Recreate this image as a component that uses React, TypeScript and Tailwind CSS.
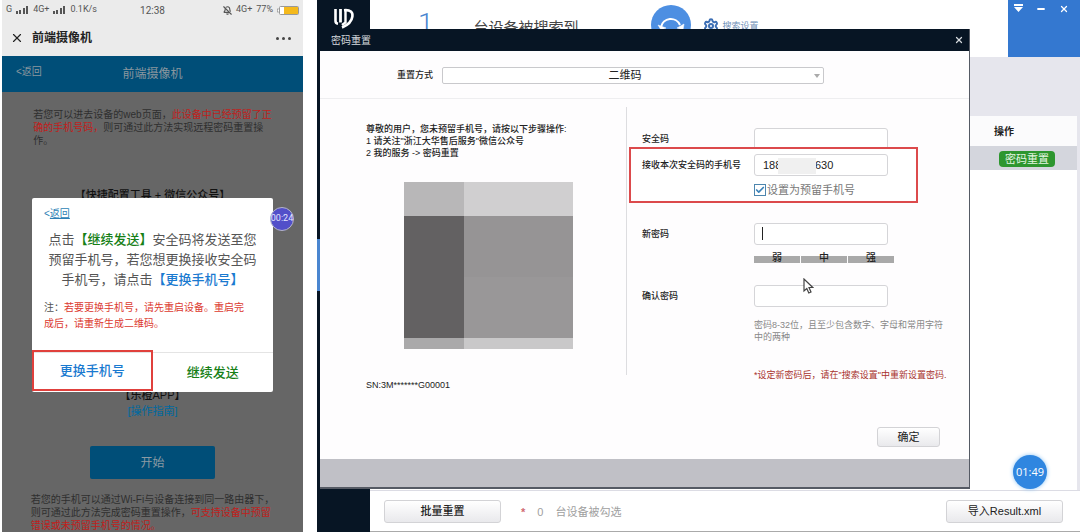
import React from 'react';
import { X, Settings, BellOff, Minus, Check } from 'lucide-react';

const Signal: React.FC = () => (
  <svg width="13" height="8" viewBox="0 0 13 8" fill="#555">
    <rect x="0" y="5" width="2" height="3" />
    <rect x="3" y="4" width="2" height="4" />
    <rect x="7" y="2" width="2" height="6" />
    <rect x="10" y="0" width="2" height="8" />
  </svg>
);

const Logo: React.FC = () => (
  <svg width="22" height="22" viewBox="0 0 22 22" fill="none" stroke="#fff">
    <path d="M2.500 1v12c0 1.500.8 2.500 2.500 2.800" strokeWidth="2.600" />
    <path d="M7.500 1v13.500" strokeWidth="2.800" />
    <path d="M11 2.200C17.500 1.500 20 4.500 19.400 8.500c-.6 4.500-4.400 8.500-10.400 11" strokeWidth="2.600" />
    <path d="M12.500 2v12.500L9 17" strokeWidth="2.400" />
  </svg>
);

const Cursor: React.FC = () => (
  <svg width="11" height="16" viewBox="0 0 11 16">
    <path
      d="M1 1v12l2.800-2.500 2 4.500 2.200-1-2-4.500h3.800z"
      fill="#fff"
      stroke="#444"
      strokeWidth="1.200"
    />
  </svg>
);

const Phone: React.FC = () => (
  <section className="relative flex w-[301px] shrink-0 flex-col bg-[#666]">
    <div className="flex h-5 items-center bg-[#ebebeb] px-1 text-[#555]">
      <div className="flex flex-1 items-center gap-1 font-[Roboto] text-[9px]">
        <span>G</span>
        <Signal />
        <span>4G+</span>
        <Signal />
        <span>0.1K/s</span>
      </div>
      <span className="font-[Roboto] text-[10px]">12:38</span>
      <div className="flex flex-1 items-center justify-end gap-1 font-[Roboto] text-[9px]">
        <BellOff className="size-[9px]" strokeWidth={3} />
        <span>4G+</span>
        <span>77%</span>
        <svg width="22" height="9" viewBox="0 0 22 9">
          <rect x="0.500" y="3" width="2" height="3" fill="#fff" stroke="#888" strokeWidth="0.600" />
          <rect x="2.500" y="0.500" width="19" height="8" rx="1" fill="#fff" stroke="#999" />
          <rect x="7" y="1" width="14" height="7" fill="#f4b91c" />
        </svg>
      </div>
    </div>

    <div className="flex h-9 items-center bg-[#ebebeb] px-2 text-[#222]">
      <button type="button" aria-label="关闭" className="mr-2">
        <X className="size-[14px]" strokeWidth={2} />
      </button>
      <h1 className="flex-1 text-[12px] font-bold">前端摄像机</h1>
      <button type="button" aria-label="更多" className="flex gap-[3px] px-1">
        <i className="size-[3px] rounded-full bg-[#444]" />
        <i className="size-[3px] rounded-full bg-[#444]" />
        <i className="size-[3px] rounded-full bg-[#444]" />
      </button>
    </div>

    <div className="grid h-9 grid-cols-3 items-center bg-[#004e78] px-[14px] text-[#8a979f]">
      <a href="#back" className="pb-1 text-[10px] leading-4">&lt;返回</a>
      <h2 className="text-center text-[12px]">前端摄像机</h2>
    </div>

    <div className="flex flex-1 flex-col items-center text-[#2f2f2f]">
      <p className="mt-4 text-[10px] leading-[13px] whitespace-nowrap">
        若您可以进去设备的web页面，<span className="text-[#c0201c]">此设备中已经预留了正</span>
        <br />
        <span className="text-[#c0201c]">确的手机号码，</span>则可通过此方法实现远程密码重置操
        <br />
        作。
      </p>
      <p className="mt-10 text-[11px] leading-4 font-medium text-[#111]">【快捷配置工具 + 微信公众号】</p>
      <p className="mt-[184px] text-[11px] leading-4 font-medium text-[#111]">【乐橙APP】</p>
      <a href="#guide" className="text-[11px] leading-4 text-[#00699f]">[操作指南]</a>
      <button type="button" className="mt-[27px] h-[33px] w-[125px] rounded-xs bg-[#004e78] text-[12px] text-[#8b9aa3]">
        开始
      </button>
      <p className="mt-[14px] text-[10px] leading-[13px] whitespace-nowrap">
        若您的手机可以通过Wi-Fi与设备连接到同一路由器下，
        <br />
        则可通过此方法完成密码重置操作，<span className="text-[#c0201c]">可支持设备中预留</span>
        <br />
        <span className="text-[#c0201c]">错误或未预留手机号的情况。</span>
      </p>
    </div>

    <div role="dialog" aria-label="更换手机号" className="absolute top-[198px] right-[30px] left-[30px] rounded-xs bg-white">
      <a href="#back" className="mt-2 ml-3 block text-[10px] leading-4 text-[#2d7fb5]">
        &lt;<span className="underline">返回</span>
      </a>
      <p className="mt-2 text-center text-[13px] leading-5 whitespace-nowrap text-[#555]">
        点击<span className="font-medium text-[#168016]">【继续发送】</span>安全码将发送至您
        <br />
        预留手机号，若您想更换接收安全码
        <br />
        手机号，请点击<span className="font-medium text-[#1a7ad0]">【更换手机号】</span>
      </p>
      <p className="mx-3 mt-[10px] text-[10px] leading-4 whitespace-nowrap text-[#dc3a30]">
        <span className="text-[#555]">注：</span>若要更换手机号，请先重启设备。重启完
        <br />
        成后，请重新生成二维码。
      </p>
      <div className="mt-5 grid grid-cols-2 border-t border-[#e4e4e4] text-[13px] font-medium">
        <button type="button" className="-mt-[3px] h-[41px] border-2 border-[#e0403c] text-[#1a7ad0]">
          更换手机号
        </button>
        <button type="button" className="h-[39px] text-[#168016]">继续发送</button>
      </div>
    </div>

    <div className="absolute top-[207px] right-[9px] flex size-6 items-center justify-center rounded-full border border-[#b5b5c8] bg-[#524fc9] font-[Roboto] text-[9px] text-[#e4e4ff]">
      00:24
    </div>
  </section>
);

const inputClass = 'h-[22px] w-[134px] rounded-[3px] border border-[#d5d5d8] bg-white px-2 text-[11px] text-[#222] outline-none';
const labelClass = 'w-28 shrink-0 font-medium';
const plainButton = 'rounded-[3px] border border-[#d3d3d6] bg-gradient-to-b from-white to-[#e9e9ec] text-[11px] text-[#222]';

const ResetForm: React.FC = () => (
  <form className="min-w-0 flex-1 text-[9px] leading-3 text-[#222]">
    <div className="flex items-center pt-[21px] pl-[15px]">
      <label htmlFor="code" className={labelClass}>安全码</label>
      <input id="code" className={inputClass} />
    </div>

    <div className="relative mr-[51px] -mt-[3px] ml-[2px] h-14 border-2 border-[#dc4a4c] bg-white pt-[5px] pl-[11px]">
      <div className="flex items-center">
        <label htmlFor="phone" className={labelClass}>接收本次安全码的手机号</label>
        <div className="relative">
          <input id="phone" className={`${inputClass} font-['Liberation_Sans']`} defaultValue="188           630" />
          <span className="absolute top-1 left-6 h-4 w-[38px] bg-[#f0f0f0]" />
        </div>
      </div>
      <label className="mt-[6px] ml-28 flex items-center text-[11px] leading-4 text-[#777]">
        <span className="relative mr-px flex size-3">
          <input type="checkbox" defaultChecked className="size-3 appearance-none border border-[#4d86ae] bg-white" />
          <Check className="pointer-events-none absolute inset-px size-[10px] text-[#3b82b8]" strokeWidth={4} />
        </span>
        设置为预留手机号
      </label>
    </div>

    <div className="mt-5 flex items-center pl-[15px]">
      <label htmlFor="new-password" className={labelClass}>新密码</label>
      <div className="relative">
        <input id="new-password" className={inputClass} />
        <span className="absolute top-1 left-2 h-[13px] w-px bg-[#222]" />
      </div>
    </div>
    <div className="mt-2 ml-[127px] flex gap-px text-center text-[10px] leading-[10px] font-medium">
      {['弱', '中', '强'].map((level) => (
        <span key={level} className="h-[10px] w-[46px] bg-linear-to-b from-transparent from-33% via-[#a9a9a9] via-33% to-[#a9a9a9]">
          {level}
        </span>
      ))}
    </div>
    <div className="mt-[22px] flex items-center pl-[15px]">
      <label htmlFor="confirm-password" className={labelClass}>确认密码</label>
      <div className="relative">
        <input id="confirm-password" className={inputClass} />
        <span className="pointer-events-none absolute -top-[7px] left-[49px]">
          <Cursor />
        </span>
      </div>
    </div>
    <p className="mt-3 ml-[127px] whitespace-nowrap text-[#888]">
      密码8-32位，且至少包含数字、字母和常用字符
      <br />
      中的两种
    </p>
    <p className="mt-[26px] ml-[127px] whitespace-nowrap text-[#a8322c]">*设定新密码后，请在"搜索设置"中重新设置密码.</p>
  </form>
);

const ResetDialog: React.FC = () => (
  <div role="dialog" aria-label="密码重置" className="absolute top-[29px] right-[110px] left-[3px] flex flex-col border-r border-b-2 border-[#555a64] bg-[#fefdfe]">
    <div className="flex h-[22px] items-center justify-between bg-[#071524] pr-[5px] pl-[11px] text-[10px] text-[#d5d9dd]">
      <h2>密码重置</h2>
      <button type="button" aria-label="关闭">
        <X className="size-[10px]" strokeWidth={3} />
      </button>
    </div>
    <div className="flex h-12 items-center gap-[9px] border-b border-[#eeeef0] pt-[2px] pl-[77px]">
      <label htmlFor="mode" className="text-[9px] font-medium text-[#222]">重置方式</label>
      <div className="relative mr-[145px] flex-1">
        <select id="mode" className="block h-[17px] w-full appearance-none rounded-xs border border-[#c9c9cc] bg-white pr-4 text-center [text-align-last:center] text-[11px] leading-[15px] text-[#222]">
          <option>二维码</option>
        </select>
        <span className="pointer-events-none absolute top-[7px] right-1 border-x-[3px] border-t-4 border-x-transparent border-t-[#aaa]" />
      </div>
    </div>
    <div className="mt-2 flex">
      <div className="w-[306px] shrink-0 pt-4 pl-[46px] text-[9px] leading-3 font-medium text-[#222]">
        <p className="whitespace-nowrap">
          尊敬的用户，您未预留手机号，请按以下步骤操作:
          <br />1 请关注"浙江大华售后服务"微信公众号
          <br />2 我的服务 -&gt; 密码重置
        </p>
        <div className="mt-[23px] ml-[38px] grid h-[167px] w-[169px] grid-cols-[60px_1fr] grid-rows-[34px_61px_61px_1fr]">
          <i className="bg-[#b8b7b8]" />
          <i className="bg-[#d0cfd0]" />
          <i className="row-span-2 bg-[#636162]" />
          <i className="bg-[#969495]" />
          <i className="bg-[#999798]" />
          <i className="bg-[#aaa9aa]" />
          <i className="bg-[#c9c8c9]" />
        </div>
        <p className="mt-[30px] text-[9px]">SN:3M*******G00001</p>
      </div>
      <div className="mb-4 w-px shrink-0 bg-[#dddde0]" />
      <ResetForm />
    </div>
    <div className="mt-9 mr-[29px] mb-3 flex justify-end">
      <button type="button" className={`${plainButton} h-5 w-[63px]`}>确定</button>
    </div>
    <div className="h-7 bg-[#c0c0c6]" />
  </div>
);

const Desktop: React.FC = () => (
  <section className="relative flex min-w-0 flex-1 bg-white">
    <aside className="relative w-[53px] shrink-0 bg-[#071524]">
      <div className="flex justify-center pt-2">
        <Logo />
      </div>
      <span className="absolute top-[239px] left-0 h-[52px] w-[3px] bg-[#4a86d0]" />
    </aside>
    <div className="flex min-w-0 flex-1 flex-col">
      <header className="flex h-[57px]">
        <div className="flex flex-1 items-start">
          <span className="mt-2 ml-12 font-[Roboto] text-[28px] leading-8 font-light text-[#4a86d0]">1</span>
          <span className="mt-4 ml-10 text-[15px] leading-6 text-[#444]">台设备被搜索到</span>
          <button type="button" aria-label="刷新" className="mt-[5px] ml-[72px] flex size-10 items-center justify-center rounded-full bg-[#4d8fe2]">
            <svg width="28" height="28" viewBox="0 0 28 28" fill="none" stroke="#fff" strokeWidth="2">
              <path d="M4 16a10 10 0 0 1 19-2" />
              <path d="M1 14l3 5 5-2zM20 17l6 2 1-6z" fill="#fff" strokeWidth="0.500" />
              <path d="M6 21a10 10 0 0 0 16 0" />
            </svg>
          </button>
          <a href="#settings" className="mt-[18px] ml-3 flex items-center gap-1 text-[9px] leading-4 text-[#7090b8]">
            <Settings className="size-4 text-[#3d6fb5]" strokeWidth={3} />
            搜索设置
          </a>
        </div>
        <div className="flex w-[72px] items-start justify-between bg-[#3478d0] pt-1 pr-[11px] pl-[6px] text-white">
          <button type="button" aria-label="菜单">
            <svg width="9" height="9" viewBox="0 0 9 9" fill="#fff">
              <path d="M0 0h9v2H0zM0 3h9L4.500 8z" />
            </svg>
          </button>
          <button type="button" aria-label="最小化">
            <Minus className="size-[10px]" strokeWidth={5} />
          </button>
          <button type="button" aria-label="关闭">
            <X className="size-[10px]" strokeWidth={3} />
          </button>
        </div>
      </header>
      <div className="h-[59px] bg-[#e6e6ed]" />
      <div className="flex-1 border-r-[3px] border-[#e6e6ed]">
        <table className="w-full table-fixed">
          <thead>
            <tr className="h-[30px] bg-[#fbfbfc]">
              <th className="pr-[63px] text-right text-[10px] font-bold text-[#222]">操作</th>
            </tr>
          </thead>
          <tbody>
            <tr className="h-6 bg-[#d4d6dd]">
              <td className="pr-[22px] text-right leading-none">
                <button type="button" className="h-4 w-14 rounded-[4px] bg-[#2d962f] text-[11px] leading-4 text-[#e3f5e0]">
                  密码重置
                </button>
              </td>
            </tr>
          </tbody>
        </table>
      </div>
      <footer className="flex h-[42px] items-start border-y border-t-[#dcdce4] border-b-[#aaa] pt-[9px] pr-[17px] pl-[14px]">
        <button type="button" className={`${plainButton} h-[23px] w-[117px] font-medium`}>批量重置</button>
        <p className="ml-5 flex flex-1 gap-3 text-[11px] leading-6 text-[#a0a0a0]">
          <span className="font-bold text-[#d06a72]">*</span>
          <span>0</span>
          <span>台设备被勾选</span>
        </p>
        <button type="button" className={`${plainButton} h-[23px] w-[117px]`}>导入Result.xml</button>
      </footer>
    </div>
    <ResetDialog />
    <div className="absolute right-[33px] bottom-[43px] flex size-[34px] items-center justify-center rounded-full bg-[#2f86e0] font-['Open_Sans'] text-[11px] text-white shadow-[0_0_4px_#8cc4f4]">
      01:49
    </div>
  </section>
);

const App: React.FC = () => {
  return (
    <main className="flex min-h-screen gap-[14px] overflow-hidden bg-white pl-[2px] font-['Liberation_Sans','Noto_Sans_CJK_SC',sans-serif]">
      <Phone />
      <Desktop />
    </main>
  );
};

export default App;
